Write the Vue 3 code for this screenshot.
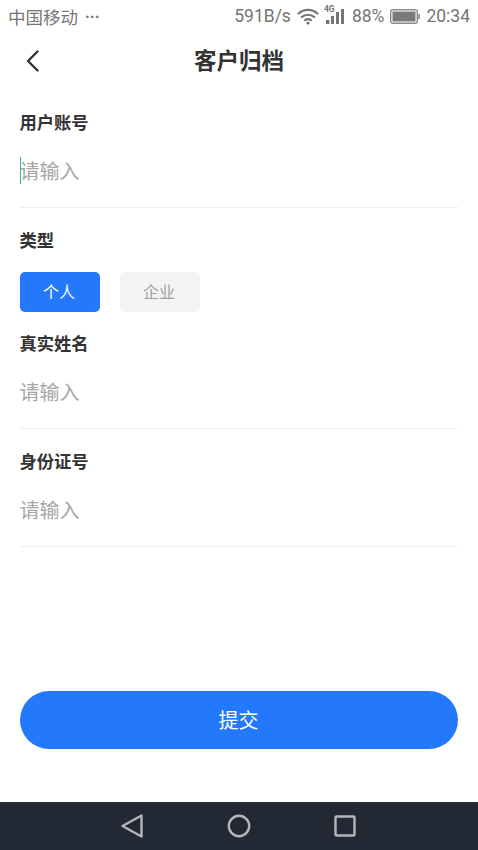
<script setup>
const tabs = [
  { label: '个人', active: true },
  { label: '企业', active: false },
]
</script>

<template>
  <div class="page">
    <header class="status">
      <div class="status-left">
        <span class="carrier">中国移动</span>
        <span class="dots">···</span>
      </div>
      <div class="status-right">
        <span>591B/s</span>
        <svg class="wifi" width="22" height="17" viewBox="0 0 22 17" fill="none" stroke="#757575" stroke-width="2.2" stroke-linecap="round">
          <path d="M1.5 5.5C7 0.6 15 0.6 20.5 5.5" />
          <path d="M4.8 9C8.3 6 13.7 6 17.2 9" />
          <path d="M8 12.2C9.8 11 12.2 11 14 12.2" />
          <circle cx="11" cy="15" r="1.6" fill="#757575" stroke="none" />
        </svg>
        <span class="signal">
          <span class="tag-4g">4G</span>
          <svg width="22" height="24" viewBox="0 0 22 24" fill="#757575">
            <rect x="2" y="16" width="3.4" height="4" />
            <rect x="7" y="12" width="3" height="8" />
            <rect x="12" y="8" width="3" height="12" />
            <rect x="17" y="5" width="3" height="15" />
          </svg>
        </span>
        <span>88%</span>
        <svg class="battery" width="30" height="15" viewBox="0 0 30 15" fill="none">
          <rect x="0.7" y="0.7" width="26.6" height="13.6" rx="2" stroke="#8a8a8a" stroke-width="1.4" />
          <rect x="2.5" y="2.5" width="23" height="10" fill="#7a7a7a" />
          <rect x="28.2" y="5" width="1.6" height="5" fill="#8a8a8a" />
        </svg>
        <span>20:34</span>
      </div>
    </header>

    <nav class="nav">
      <svg class="back" width="16" height="24" viewBox="0 0 16 24" fill="none" stroke="#333" stroke-width="2.4" stroke-linecap="round" stroke-linejoin="round">
        <path d="M12.5 2.5L3 12L12.5 21.5" />
      </svg>
      <h1 class="title">客户归档</h1>
    </nav>

    <main class="form">
      <section class="field">
        <label class="label">用户账号</label>
        <div class="input focused"><i class="caret"></i>请输入</div>
      </section>

      <section class="type">
        <label class="label">类型</label>
        <div class="tabs">
          <button
            v-for="tab in tabs"
            :key="tab.label"
            class="tab"
            :class="{ active: tab.active }"
          >{{ tab.label }}</button>
        </div>
      </section>

      <section class="field after-type">
        <label class="label">真实姓名</label>
        <div class="input">请输入</div>
      </section>

      <section class="field">
        <label class="label">身份证号</label>
        <div class="input">请输入</div>
      </section>
    </main>

    <div class="submit-wrap">
      <button class="submit">提交</button>
    </div>

    <footer class="sysbar">
      <svg width="24" height="26" viewBox="0 0 24 26" fill="none" stroke="#b4b6ba" stroke-width="2.4" stroke-linejoin="round">
        <path d="M21.5 2.5V23.5L2.5 13Z" />
      </svg>
      <svg width="24" height="24" viewBox="0 0 24 24" fill="none" stroke="#b4b6ba" stroke-width="2.4">
        <circle cx="12" cy="12" r="10.2" />
      </svg>
      <svg width="22" height="22" viewBox="0 0 22 22" fill="none" stroke="#b4b6ba" stroke-width="2.4" stroke-linejoin="round">
        <rect x="1.5" y="1.5" width="19" height="19" rx="1" />
      </svg>
    </footer>
  </div>
</template>

<style>
html, body { margin: 0; padding: 0; background: #fff; }
</style>

<style scoped>
.page {
  width: 478px;
  height: 850px;
  display: flex;
  flex-direction: column;
  background: #fff;
  font-family: "Noto Sans CJK SC", "Noto Sans", sans-serif;
  overflow: hidden;
}
.status {
  height: 32px;
  flex: none;
  display: flex;
  align-items: center;
  justify-content: space-between;
  padding: 0 8px;
  color: #757575;
  font-size: 17.5px;
  font-family: Roboto, "Noto Sans CJK SC", sans-serif;
}
.status-left, .status-right { display: flex; align-items: center; }
.status-right { gap: 6px; }
.dots { margin-left: 7px; font-weight: 700; font-size: 16px; }
.signal { position: relative; display: flex; margin-left: -1px; margin-top: -1px; }
.tag-4g {
  position: absolute;
  left: 0;
  top: 0;
  font-size: 8.5px;
  font-weight: 700;
  line-height: 10px;
}
.nav {
  height: 60px;
  flex: none;
  position: relative;
  display: flex;
  align-items: center;
  justify-content: center;
}
.back { position: absolute; left: 25px; top: 17px; }
.title {
  margin: 0 0 6px;
  font-size: 22.5px;
  font-weight: 700;
  line-height: 30px;
  color: #333;
}
.form { padding: 0 20px; flex: none; }
.label {
  display: block;
  margin-left: -0.5px;
  font-size: 17.3px;
  line-height: 24px;
  font-weight: 700;
  color: #333;
}
.field { border-bottom: 1px solid #eeeeee; }
.field + .type { padding-top: 20px; }
.field:first-child { margin-top: 18px; }
.input {
  display: flex;
  align-items: center;
  height: 73px;
  box-sizing: border-box;
  margin-left: -0.5px;
  font-size: 20px;
  color: #a6a6a6;
}
.caret {
  width: 1.5px;
  height: 27px;
  margin-right: -1.5px;
  background: #2fb8b0;
}
.tabs { display: flex; gap: 20px; margin-top: 20px; }
.tab {
  width: 80px;
  height: 40px;
  padding: 0 2px 2px 0;
  border: 0;
  border-radius: 5px;
  background: #f4f4f4;
  color: #a0a0a0;
  font: inherit;
  font-size: 16px;
}
.tab.active { background: #2478fb; color: #fff; }
.after-type { margin-top: 19px; }
.field:last-child { margin-top: 20px; }
.submit-wrap {
  flex: 1;
  display: flex;
  align-items: flex-end;
  padding: 0 20px 53px;
}
.submit {
  width: 100%;
  height: 58px;
  padding: 0 1px 2px 0;
  border: 0;
  border-radius: 29px;
  background: #2478fb;
  color: #fff;
  font: inherit;
  font-size: 20px;
}
.sysbar {
  height: 48px;
  flex: none;
  display: flex;
  align-items: center;
  justify-content: center;
  gap: 83px;
  padding-right: 2px;
  background: #222834;
}
</style>
